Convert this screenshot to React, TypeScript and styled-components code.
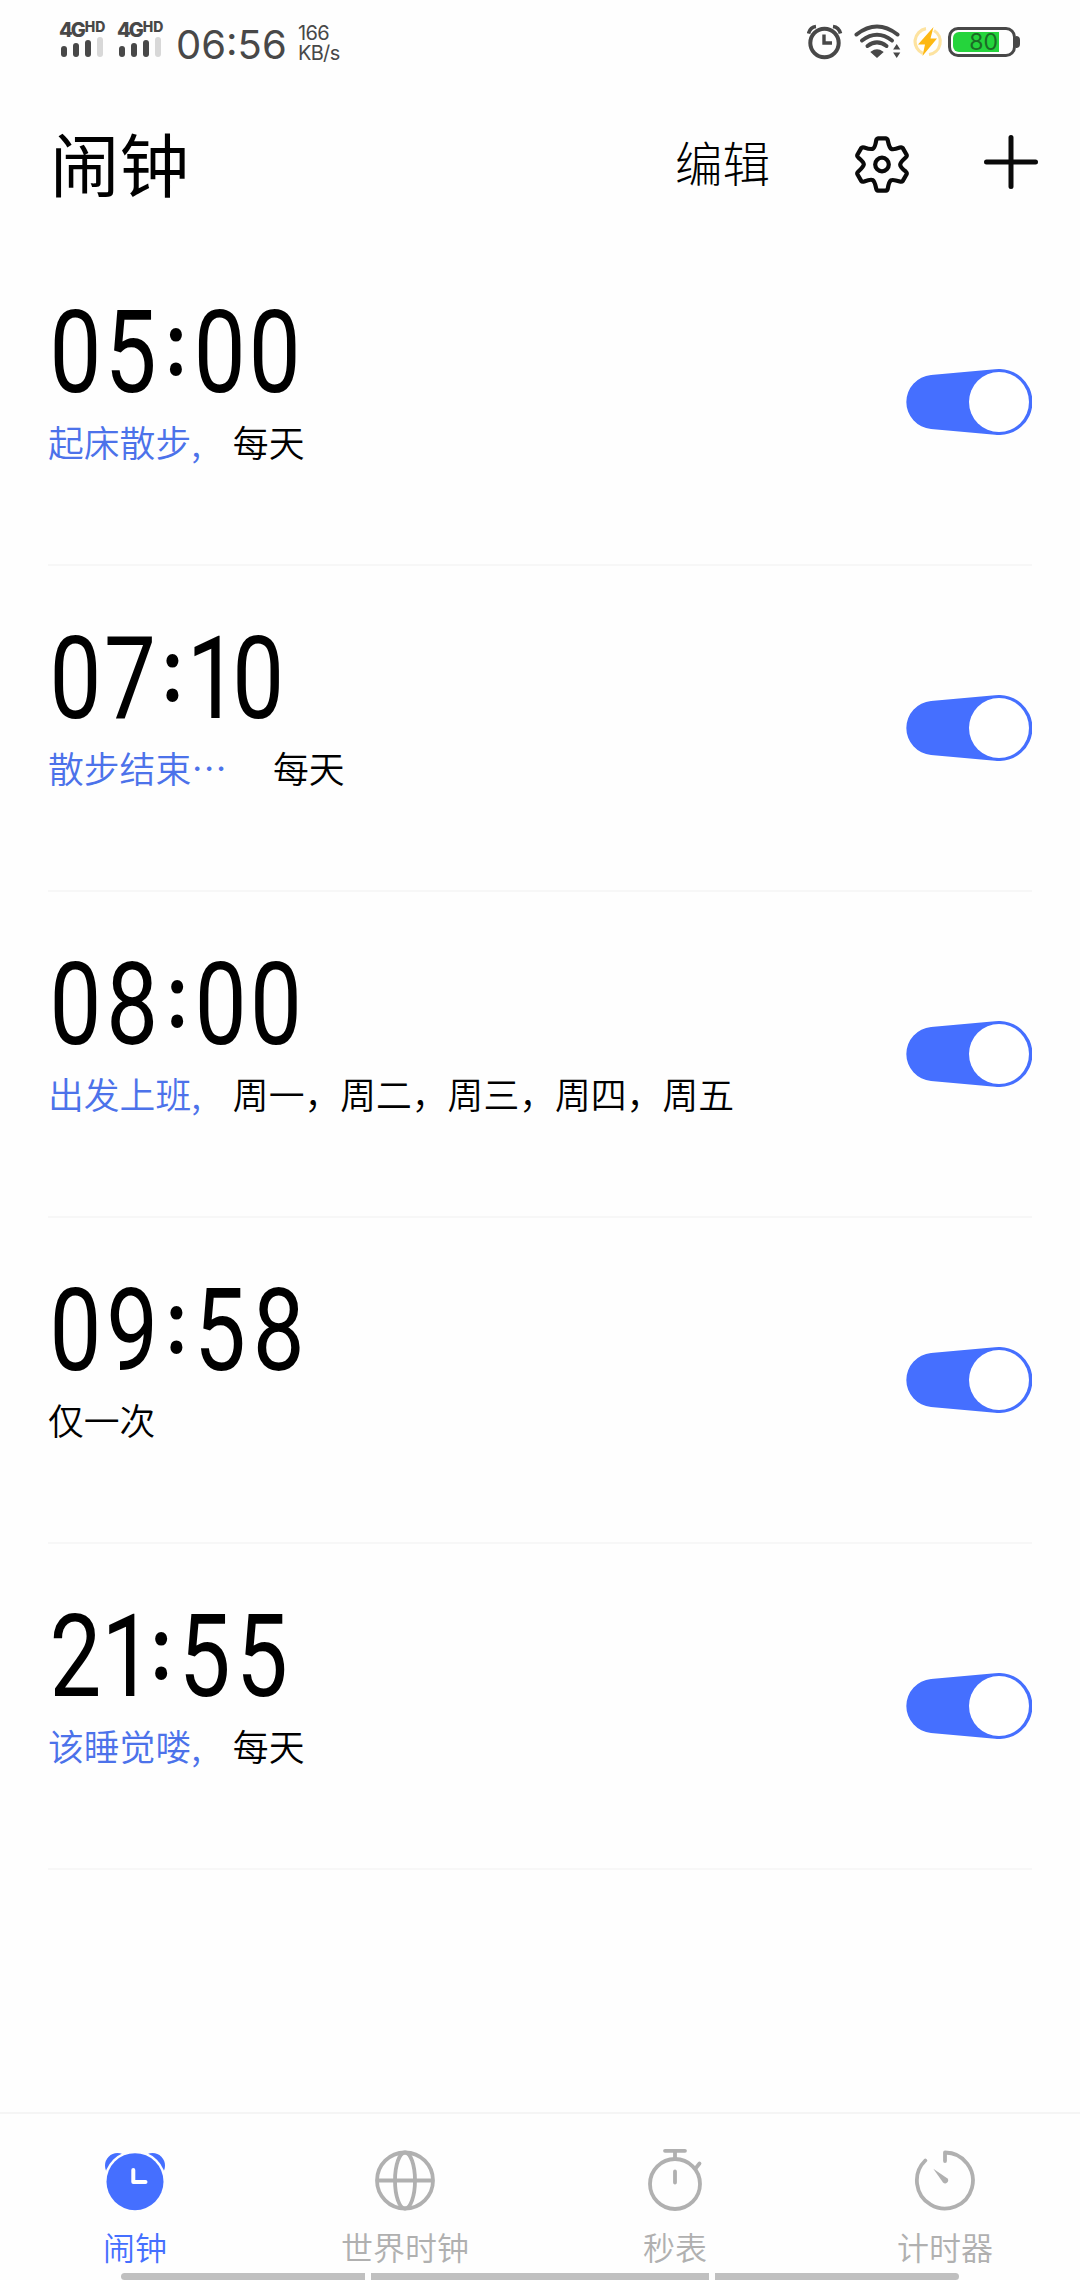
import React from "react";
import styled, { createGlobalStyle } from "styled-components";

const BLUE = "#456fff";
const GREY = "#b0b0b0";
const STATUS = "#484848";

const GlobalStyle = createGlobalStyle`
  * { box-sizing: border-box; }
  body { margin: 0; background: #fdfdfd; }
`;

const Screen = styled.div`
  width: 1080px;
  height: 2280px;
  display: flex;
  flex-direction: column;
  overflow: hidden;
  background: #fefefe;
  color: #000;
  font-family: "Noto Sans CJK SC", sans-serif;
  font-weight: 350;
`;

/* Status bar */
const StatusBar = styled.header`
  height: 84px;
  padding: 0 60px 0 59px;
  display: flex;
  justify-content: space-between;
  align-items: flex-start;
  color: ${STATUS};
  font-family: Inter, sans-serif;
`;

const StatusGroup = styled.div`
  display: flex;
  align-items: flex-start;
`;

const Signal = styled.div`
  width: 58px;
  padding-top: 20px;
  display: flex;
  flex-direction: column;
`;

const Network = styled.div`
  display: flex;
  height: 17px;
  align-items: flex-start;
  font-weight: 800;
  font-size: 20px;
  line-height: 20px;
  letter-spacing: -2px;
`;

const NetworkSuffix = styled.span`
  font-size: 14px;
  line-height: 14px;
  letter-spacing: 0;
  margin-left: 1px;
`;

const Bars = styled.div`
  display: flex;
  align-items: flex-end;
  gap: 6px;
  height: 20px;
  padding-left: 2px;
`;

const Bar = styled.i<{ $h: number; $off?: boolean }>`
  width: 6px;
  height: ${(p) => p.$h}px;
  border-radius: 3px;
  background: ${(p) => (p.$off ? "#d8d8d8" : STATUS)};
`;

const StatusTime = styled.span`
  width: 122px;
  margin-left: 1px;
  padding-top: 21px;
  font-size: 40px;
  line-height: 48px;
  font-weight: 400;
  white-space: nowrap;
`;

const Speed = styled.div`
  padding-top: 23px;
  font-size: 20px;
  line-height: 20px;
  font-weight: 400;
  letter-spacing: -0.7px;
`;

const StatusIcons = styled.div`
  display: flex;
  align-items: flex-start;
  padding-top: 22px;
`;

const StatusIconSlot = styled.span<{ $gap: number }>`
  display: flex;
  margin-right: ${(p) => p.$gap}px;
`;

const Battery = styled.div`
  display: flex;
  align-items: center;
  height: 40px;
`;

const BatteryCase = styled.div`
  width: 68px;
  height: 30px;
  padding: 2px;
  border: 3px solid ${STATUS};
  border-radius: 10px;
  display: flex;
`;

const BatteryFill = styled.div`
  width: 46px;
  border-radius: 6px 0 0 6px;
  background: #25d43c;
  color: #1c6b26;
  font-size: 23px;
  font-weight: 400;
  line-height: 21px;
  text-align: right;
  padding-right: 1px;
`;

const BatteryNub = styled.div`
  width: 4px;
  height: 12px;
  border-radius: 0 4px 4px 0;
  background: ${STATUS};
`;

/* Title bar */
const TitleBar = styled.div`
  height: 156px;
  padding: 0 42px 0 50px;
  display: flex;
  align-items: flex-start;
`;

const Title = styled.h1`
  margin: 30px auto 0 0;
  font-size: 69.5px;
  line-height: 96px;
  font-weight: 400;
`;

const EditButton = styled.button`
  margin: 43px 82px 0 0;
  padding: 0;
  border: 0;
  background: none;
  color: inherit;
  font: inherit;
  font-weight: 300;
  font-size: 47.5px;
  line-height: 70px;
`;

const IconButton = styled.button<{ $gap?: number }>`
  margin: 51px ${(p) => p.$gap ?? 0}px 0 0;
  padding: 0;
  border: 0;
  background: none;
  display: flex;
`;

/* Alarm list */
const List = styled.main`
  flex: 1;
  padding: 0 48px;
`;

const Row = styled.section`
  height: 326px;
  display: flex;
  justify-content: space-between;
  align-items: flex-start;
  border-bottom: 2px solid #f7f7f7;
`;

const Info = styled.div`
  display: flex;
  flex-direction: column;
`;

const Time = styled.div`
  height: 174px;
  padding-top: 54px;
  font-family: Roboto, sans-serif;
  font-weight: 400;
  font-size: 115px;
  line-height: 118px;
  white-space: nowrap;
  transform: scaleX(0.803);
  transform-origin: left;
`;

const Glyph = styled.span<{ $before: number; $after: number }>`
  margin-left: ${(p) => p.$before}px;
  margin-right: ${(p) => p.$after}px;
`;

const Colon = styled(Glyph)`
  position: relative;
  top: -16px;
  font-size: 88px;
  line-height: 1;
  font-weight: 800;
`;

const Caption = styled.div`
  display: flex;
  font-size: 35.8px;
  line-height: 54px;
  white-space: nowrap;
`;

const Label = styled.span<{ $gap: number }>`
  color: #4c72ea;
  margin-right: ${(p) => p.$gap}px;
`;

const Switch = styled.button`
  margin-top: 129px;
  padding: 0;
  border: 0;
  background: none;
  display: flex;
`;

/* Bottom tabs */
const Tabs = styled.nav`
  height: 161px;
  display: grid;
  grid-template-columns: repeat(4, 270px);
  border-top: 2px solid #f5f5f5;
`;

const Tab = styled.a<{ $active?: boolean }>`
  padding-top: 34px;
  display: flex;
  flex-direction: column;
  align-items: center;
  gap: 7px;
  color: ${(p) => (p.$active ? BLUE : GREY)};
  font-size: 32px;
  line-height: 46px;
`;

const HomeBar = styled.div`
  height: 7px;
  padding: 0 121px;
  display: grid;
  grid-template-columns: 244px 338px 244px;
  gap: 6px;
`;

const HomeSegment = styled.i<{ $radius: string }>`
  background: #c0c0c0;
  border-radius: ${(p) => p.$radius};
`;

/* Side bearings of the clock digits: space before and after each */
const metrics: Record<string, [number, number]> = {
  "0": [2, 2],
  "1": [-2, -10],
  "2": [2, 2],
  "5": [2, 4.5],
  "7": [1, 1],
  "8": [4, 4],
  "9": [4, 3],
  ":": [7, 7],
};

const alarms = [
  { time: "05:00", label: "起床散步,", gap: 32, repeat: "每天" },
  { time: "07:10", label: "散步结束⋯", gap: 46, repeat: "每天" },
  { time: "08:00", label: "出发上班,", gap: 32, repeat: "周一，周二，周三，周四，周五" },
  { time: "09:58", label: "", gap: 0, repeat: "仅一次" },
  { time: "21:55", label: "该睡觉喽,", gap: 32, repeat: "每天" },
];

const ClockTime = ({ value }: { value: string }) => (
  <Time>
    {value.split("").map((c, i) => {
      const Part = c === ":" ? Colon : Glyph;
      return (
        <Part key={i} $before={metrics[c][0]} $after={metrics[c][1]}>
          {c}
        </Part>
      );
    })}
  </Time>
);

const SignalMeter = () => (
  <Signal>
    <Network>
      4G<NetworkSuffix>HD</NetworkSuffix>
    </Network>
    <Bars>
      <Bar $h={11} />
      <Bar $h={14} />
      <Bar $h={17} />
      <Bar $h={20} $off />
    </Bars>
  </Signal>
);

const gearPath = (() => {
  const rot = (x: number, y: number, k: number) => {
    const a = (k * Math.PI) / 3;
    return `${(x * Math.cos(a) - y * Math.sin(a)).toFixed(2)} ${(x * Math.sin(a) + y * Math.cos(a)).toFixed(2)}`;
  };
  let d = "";
  for (let k = 0; k < 6; k++) {
    d += `${k ? "L" : "M"}${rot(-3.8, -26.2, k)}L${rot(3.8, -26.2, k)}Q${rot(5.4, -26, k)} ${rot(5.8, -24, k)}`;
    d += `C${rot(7.8, -14.4, k)} ${rot(9, -13.7, k)} ${rot(-5.8, -24, k + 1)}Q${rot(-5.4, -26, k + 1)} ${rot(-3.8, -26.2, k + 1)}`;
  }
  return d + "Z";
})();

const GearIcon = () => (
  <svg width="60" height="60" viewBox="-30 -29.5 60 60" fill="none" stroke="#0a0a0a" strokeWidth="4.2" strokeLinejoin="round">
    <path d={gearPath} />
    <circle r="6.8" />
  </svg>
);

const PlusIcon = () => (
  <svg width="54" height="54" viewBox="0 0 54 54" stroke="#0a0a0a" strokeWidth="5" strokeLinecap="round">
    <path d="M27 2.500V51.500M2.500 27H51.500" />
  </svg>
);

const SwitchOn = () => (
  <svg width="126" height="66" viewBox="0 0 126 66">
    <path d="M25 6.1A27 27 0 0 0 25 59.9L89 65.7A33 33 0 1 0 89 0.3Z" fill={BLUE} />
    <circle cx="93" cy="33" r="30" fill="#fff" />
  </svg>
);

const StatusAlarm = () => (
  <svg width="36" height="40" viewBox="0 0 36 40" fill="none" stroke={STATUS} strokeWidth="4">
    <circle cx="17.500" cy="21" r="14.200" />
    <path d="M17 12.500V21H25" strokeWidth="3.400" />
    <path d="M1.500 11.500C2.500 7.500 5 5 9 4.500M33.500 11.500C32.500 7.500 30 5 26 4.500" strokeWidth="3.600" />
  </svg>
);

const StatusWifi = () => (
  <svg width="48" height="40" viewBox="0 0 48 40" fill="none" stroke={STATUS} strokeWidth="4" strokeLinecap="round">
    <path d="M2.500 12.500Q23 -3.500 43.500 12.500" />
    <path d="M8 18.500Q23 7 38 18.500" />
    <path d="M13.500 24Q23 16.800 32.500 24" />
    <path d="M17.500 30Q23 26 28.500 30L23 35Z" fill={STATUS} strokeWidth="1.500" />
    <path d="M42.700 22L46.300 27.500H39.100ZM42.700 36L46.300 30.500H39.100Z" fill={STATUS} stroke="none" />
  </svg>
);

const StatusCharge = () => (
  <svg width="30" height="40" viewBox="0 0 30 40">
    <g fill="none" stroke="#fde3a0" strokeWidth="3.200">
      <path d="M10 31.500A13 13 0 0 1 13 6.700" />
      <path d="M21 8.500A13 13 0 0 1 16 32.500" />
    </g>
    <path d="M20.500 5L5 22.500H12L9.500 34L24 16.500H17.500Z" fill="#fdb813" />
  </svg>
);

const AlarmIcon = () => (
  <svg width="64" height="68" viewBox="0 0 64 68">
    <circle cx="14.500" cy="17.500" r="12.500" fill={BLUE} />
    <circle cx="49.500" cy="17.500" r="12.500" fill={BLUE} />
    <circle cx="32" cy="33.700" r="31" fill="#fefefe" />
    <circle cx="32" cy="33.700" r="28.500" fill={BLUE} />
    <path d="M30.300 22V34H42.500" fill="none" stroke="#fff" strokeWidth="4" strokeLinecap="round" strokeLinejoin="round" />
  </svg>
);

const GlobeIcon = () => (
  <svg width="64" height="68" viewBox="0 0 64 68" fill="none" stroke={GREY} strokeWidth="3.800">
    <circle cx="32" cy="32.500" r="28" />
    <ellipse cx="32" cy="32.500" rx="10" ry="28" />
    <path d="M4 32.500H60" />
  </svg>
);

const StopwatchIcon = () => (
  <svg width="64" height="68" viewBox="0 0 64 68" fill="none" stroke={GREY} strokeWidth="3.800" strokeLinecap="round">
    <circle cx="32" cy="36" r="25" />
    <path d="M22 2.800H42M32 4V10.500M52.500 20.500L56.500 15.500M32 23.500V34.500" />
  </svg>
);

const TimerIcon = () => (
  <svg width="64" height="68" viewBox="0 0 64 68" fill="none" stroke={GREY} strokeWidth="3.800" strokeLinecap="round" strokeLinejoin="round">
    <path d="M32 13V4.500A28 28 0 1 1 12.300 12.500" />
    <path d="M20.300 20.700L34.200 30.300A2.800 2.800 0 0 1 30 34.500Z" fill={GREY} stroke="none" />
  </svg>
);

const tabs = [
  { name: "闹钟", icon: <AlarmIcon />, active: true },
  { name: "世界时钟", icon: <GlobeIcon /> },
  { name: "秒表", icon: <StopwatchIcon /> },
  { name: "计时器", icon: <TimerIcon /> },
];

export default function App() {
  return (
    <Screen>
      <GlobalStyle />
      <StatusBar>
        <StatusGroup>
          <SignalMeter />
          <SignalMeter />
          <StatusTime>06:56</StatusTime>
          <Speed>
            <div>166</div>
            <div>KB/s</div>
          </Speed>
        </StatusGroup>
        <StatusIcons>
          <StatusIconSlot $gap={11}>
            <StatusAlarm />
          </StatusIconSlot>
          <StatusIconSlot $gap={11}>
            <StatusWifi />
          </StatusIconSlot>
          <StatusIconSlot $gap={5}>
            <StatusCharge />
          </StatusIconSlot>
          <Battery>
            <BatteryCase>
              <BatteryFill>80</BatteryFill>
            </BatteryCase>
            <BatteryNub />
          </Battery>
        </StatusIcons>
      </StatusBar>
      <TitleBar>
        <Title>闹钟</Title>
        <EditButton>编辑</EditButton>
        <IconButton $gap={72}>
          <GearIcon />
        </IconButton>
        <IconButton>
          <PlusIcon />
        </IconButton>
      </TitleBar>
      <List>
        {alarms.map((a) => (
          <Row key={a.time}>
            <Info>
              <ClockTime value={a.time} />
              <Caption>
                {a.label && <Label $gap={a.gap}>{a.label}</Label>}
                <span>{a.repeat}</span>
              </Caption>
            </Info>
            <Switch>
              <SwitchOn />
            </Switch>
          </Row>
        ))}
      </List>
      <Tabs>
        {tabs.map((t) => (
          <Tab key={t.name} $active={t.active}>
            {t.icon}
            <span>{t.name}</span>
          </Tab>
        ))}
      </Tabs>
      <HomeBar>
        <HomeSegment $radius="4px 0 0 4px" />
        <HomeSegment $radius="0" />
        <HomeSegment $radius="0 4px 4px 0" />
      </HomeBar>
    </Screen>
  );
}
